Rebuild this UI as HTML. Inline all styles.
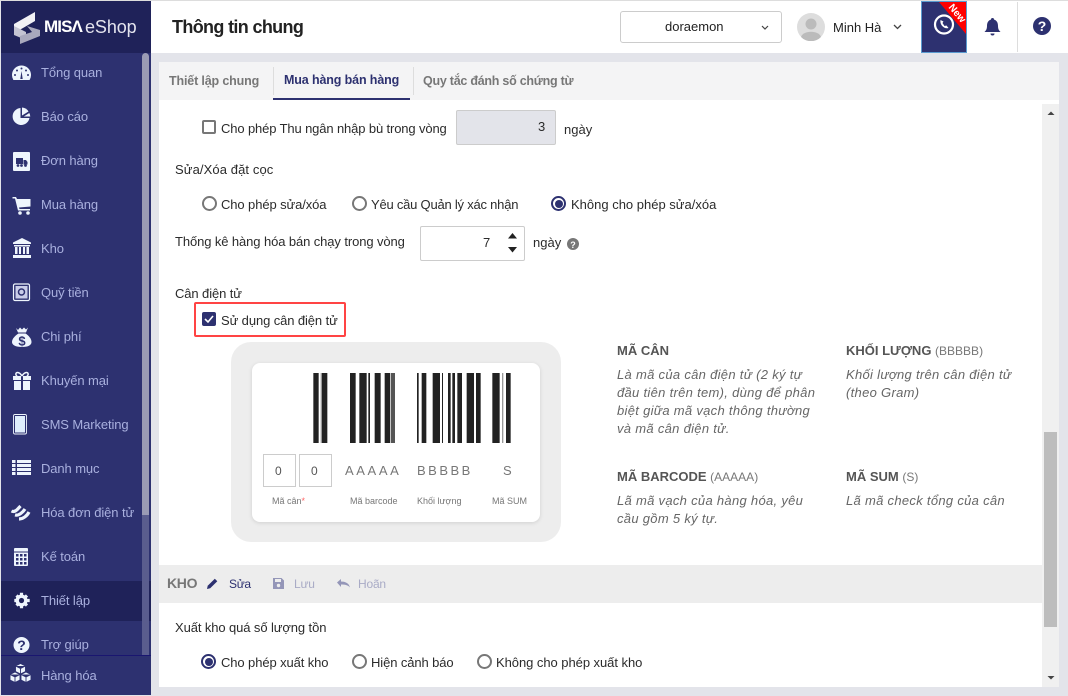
<!DOCTYPE html>
<html><head><meta charset="utf-8"><style>
html,body{margin:0;padding:0}
body{width:1068px;height:696px;overflow:hidden;position:relative;background:#e3e4ea;font-family:"Liberation Sans","Noto Sans CJK SC",sans-serif;font-size:13px;color:#2b2b2b}
div,span,svg{position:absolute}
.t{white-space:nowrap;line-height:16px}
.n{color:#a9b0de;font-size:13px;left:41px;letter-spacing:-.1px}
.i{left:11px;width:22px;height:22px}
.rd{width:11px;height:11px;border:2px solid #777;border-radius:50%;background:#fff}
.on{border-color:#2d3170}
.on:after{content:"";position:absolute;left:1.5px;top:1.5px;width:8px;height:8px;border-radius:50%;background:#2d3170}
.em{font-style:italic;color:#666;line-height:18px;font-size:13px;letter-spacing:.3px}
.h{font-weight:bold;color:#555;font-size:13px}
.sm{font-size:9px;color:#777;line-height:10px}
.g{color:#777;font-size:13px;letter-spacing:2.6px}
</style></head><body>
<div style="left:0;top:0;width:1068px;height:1px;background:#ddd"></div>
<div style="left:1px;top:1px;width:150px;height:694px;background:#2d3170"></div>
<div style="left:1px;top:1px;width:150px;height:52px;background:#1f2259"></div>
<div style="left:1px;top:581px;width:150px;height:40px;background:#1f2259"></div>
<div style="left:142px;top:53px;width:7px;height:602px;background:#9a9bb4;border-radius:4px 4px 0 0"></div>
<div style="left:142px;top:515px;width:7px;height:140px;background:#5a5d8e"></div>
<div style="left:1px;top:655px;width:150px;height:1px;background:#1a1670"></div>
<div style="left:1px;top:656px;width:150px;height:39px;background:#2d3170"></div>

<svg style="left:13px;top:11px" width="28" height="35" viewBox="0 0 28 35"><path d="M1 13L22 1V10L10 17L1 22Z" fill="#f1f1f5"/><path d="M1 15L1 24L13 29V21L5 17Z" fill="#c4c4d2"/><path d="M14 15L27 19V25L7 33V25L19 21Z" fill="#a9a9bd"/></svg>
<div class="t" style="left:44px;top:19px;font-weight:bold;font-size:17px;color:#fff;letter-spacing:-.9px">MISΛ</div>
<div class="t" style="left:85px;top:19px;font-size:18px;color:#e4e4ee;letter-spacing:-.1px">eShop</div>

<div class="t n" style="top:65px">Tổng quan</div>
<div class="t n" style="top:109px">Báo cáo</div>
<div class="t n" style="top:153px">Đơn hàng</div>
<div class="t n" style="top:197px">Mua hàng</div>
<div class="t n" style="top:241px">Kho</div>
<div class="t n" style="top:285px">Quỹ tiền</div>
<div class="t n" style="top:329px">Chi phí</div>
<div class="t n" style="top:373px">Khuyến mại</div>
<div class="t n" style="top:417px">SMS Marketing</div>
<div class="t n" style="top:461px">Danh mục</div>
<div class="t n" style="top:505px">Hóa đơn điện tử</div>
<div class="t n" style="top:549px">Kế toán</div>
<div class="t n" style="top:593px">Thiết lập</div>
<div class="t n" style="top:637px">Trợ giúp</div>
<div class="t n" style="top:668px">Hàng hóa</div>

<svg class="i" style="top:64.500px" viewBox="0 0 22 22" fill="#eef5fd"><path d="M2.400 15A9.500 9.500 0 1 1 18.600 15Z"/><path d="M10.500 6l-1.200 8h2.400z" fill="#2d3170"/><g fill="#2d3170"><circle cx="4" cy="10" r="1"/><circle cx="6" cy="5.500" r="1"/><circle cx="10.500" cy="3.500" r="1"/><circle cx="15" cy="5.500" r="1"/><circle cx="17" cy="10" r="1"/></g></svg>
<svg class="i" style="top:105px" viewBox="0 0 22 22" fill="#eef5fd"><path d="M9.500 3A8.500 8.500 0 1 0 18.500 13H9.500Z"/><path d="M11 2.500A8 8 0 0 1 17.500 6.500L11 10.500Z"/><path d="M18.300 8A9 9 0 0 1 19.300 11.500H12.800Z"/></svg>
<svg class="i" style="top:150px" viewBox="0 0 22 22"><rect x="2" y="2" width="17" height="19" rx="1" fill="#eef5fd"/><path d="M5 8h7v6H5zM12.500 10h2.500l1.500 2v2.500h-4z" fill="#2d3170"/><circle cx="7" cy="15.500" r="1.400" fill="#2d3170"/><circle cx="10.500" cy="15.500" r="1.400" fill="#2d3170"/><circle cx="14.500" cy="15.500" r="1.400" fill="#2d3170"/></svg>
<svg class="i" style="top:194px" viewBox="0 0 22 22" fill="#eef5fd"><path d="M1.500 3h3.500l1 2h13.500v7.500l-11.500 1 .5 1.500H19v1.500H7L4 4.500H1.500Z"/><circle cx="9" cy="19" r="1.800"/><circle cx="17" cy="19" r="1.800"/></svg>
<svg class="i" style="top:237px" viewBox="0 0 22 22" fill="#eef5fd"><path d="M11 1l9 4.500V7H2V5.500Z"/><rect x="3" y="8" width="16" height="1.500"/><rect x="4" y="10" width="2.500" height="7"/><rect x="8" y="10" width="2" height="7"/><rect x="12" y="10" width="2" height="7"/><rect x="15.500" y="10" width="2.500" height="7"/><rect x="2" y="18" width="18" height="3"/></svg>
<svg class="i" style="top:282px" viewBox="0 0 22 22"><rect x="2.500" y="2" width="16" height="16.500" rx="1.500" fill="#2d3170" stroke="#eef5fd" stroke-width="1.200"/><rect x="4.500" y="4" width="12" height="12.500" fill="#c9cde8"/><circle cx="10.500" cy="10" r="3" fill="none" stroke="#2d3170" stroke-width="1.500"/></svg>
<svg class="i" style="top:326px" viewBox="0 0 22 22" fill="#eef5fd"><path d="M5 2l2 2 2-2.500 2 2 2-2 2 2 2-2-2 5H7Z"/><path d="M7.500 7.500h7c3 2 6 5 6 8.500 0 3-3 5-9.500 5S1 19 1 16c0-3.500 3.500-6.500 6.500-8.500Z"/><text x="11" y="19.500" font-size="13" font-weight="bold" fill="#2d3170" text-anchor="middle" font-family="Liberation Sans">$</text></svg>
<svg class="i" style="top:370px" viewBox="0 0 22 22" fill="#eef5fd"><path d="M2 6h8v4H2ZM12 6h8v4h-8ZM3 11h7v9H3ZM12 11h7v9h-7Z"/><path d="M11 6C8 1 4 2 5 5l1 1M11 6c3-5 7-4 6-1l-1 1" fill="none" stroke="#eef5fd" stroke-width="1.500"/></svg>
<svg class="i" style="top:413px" viewBox="0 0 22 22"><rect x="2.500" y="1.500" width="13" height="19.500" rx="1.500" fill="#2d3170" stroke="#eef5fd" stroke-width=".9"/><rect x="4" y="3" width="10" height="16.500" fill="#dfeefc"/></svg>
<svg class="i" style="top:459px" viewBox="0 0 22 22" fill="#eef5fd"><path d="M1 1h3.500v3H1zM6 1h14v3H6zM1 5h3.500v3H1zM6 5h14v3H6zM1 9h3.500v3H1zM6 9h14v3H6zM1 13h3.500v3H1zM6 13h14v3H6z"/></svg>
<svg class="i" style="top:502px;left:10px" viewBox="0 0 22 22" fill="none" stroke="#eef5fd" stroke-width="3.200"><path d="M1.500 9c4 2 7-3 9-5"/><path d="M5 13c4 1 8-3 10-6"/><path d="M9 17c4 0 8-3 10-7"/></svg>
<svg class="i" style="top:546px" viewBox="0 0 22 22"><rect x="3" y="2" width="14" height="18" rx="1" fill="#eef5fd"/><path d="M3 6h14" stroke="#2d3170"/><g fill="#2d3170"><rect x="5" y="8" width="2.500" height="2.500"/><rect x="9" y="8" width="2.500" height="2.500"/><rect x="13" y="8" width="2.500" height="2.500"/><rect x="5" y="12" width="2.500" height="2.500"/><rect x="9" y="12" width="2.500" height="2.500"/><rect x="13" y="12" width="2.500" height="2.500"/><rect x="5" y="16" width="2.500" height="2.500"/><rect x="9" y="16" width="2.500" height="2.500"/><rect x="13" y="16" width="2.500" height="2.500"/></g></svg>
<svg class="i" style="top:590px" viewBox="0 0 22 22"><path d="M10 2.800v15.400M2.800 10.500h15.400M5 5.500l10.500 10M15.500 5.500L5 15.500" stroke="#eef5fd" stroke-width="3.200" transform="translate(.5 0)"/><circle cx="10.500" cy="10.500" r="6" fill="#eef5fd"/><circle cx="10.500" cy="10.500" r="2.600" fill="#1f2259"/></svg>
<svg class="i" style="top:634px" viewBox="0 0 22 22"><circle cx="10.500" cy="11" r="8" fill="#eef5fd"/><text x="10.500" y="16" font-size="14" font-weight="bold" fill="#2d3170" text-anchor="middle" font-family="Liberation Sans">?</text></svg>
<svg style="left:9px;top:662px" width="23" height="21" viewBox="0 0 23 21" fill="#eef5fd" stroke="#2d3170" stroke-width=".9"><path d="M11.500 1.500l5 2.500v5.500l-5 2.500-5-2.500V4ZM6.500 4l5 2.500 5-2.500M11.500 6.500V12"/><path d="M6 10l5 2.500v5.500l-5 2.500-5-2.500v-5.500ZM1 12.500L6 15l5-2.500M6 15v5.500"/><path d="M17 10l5 2.500v5.500l-5 2.500-5-2.500v-5.500ZM12 12.500l5 2.500 5-2.500M17 15v5.500"/></svg>

<div style="left:151px;top:1px;width:917px;height:52px;background:#fff"></div>
<div class="t" style="left:172px;top:16px;font-size:18px;font-weight:bold;color:#222;line-height:22px;letter-spacing:-.65px">Thông tin chung</div>
<div style="left:620px;top:11px;width:160px;height:30px;border:1px solid #ccc;border-radius:3px;background:#fff"></div>
<div class="t" style="left:665px;top:19px;color:#222;font-size:13px">doraemon</div>
<svg style="left:761px;top:25px" width="8" height="6"><path d="M1 1l3 3 3-3" fill="none" stroke="#444" stroke-width="1.200"/></svg>
<svg style="left:797px;top:13px" width="28" height="28" viewBox="0 0 28 28"><circle cx="14" cy="14" r="14" fill="#ddd"/><circle cx="14" cy="11" r="5.500" fill="#bbb"/><path d="M4 24c2-7 18-7 20 0a14 14 0 0 1-20 0Z" fill="#bbb"/></svg>
<div class="t" style="left:833px;top:20px;color:#222;font-size:13px">Minh Hà</div>
<svg style="left:893px;top:24px" width="9" height="7"><path d="M1 1l3.500 3.500L8 1" fill="none" stroke="#444" stroke-width="1.300"/></svg>
<div style="left:921px;top:1px;width:44px;height:50px;background:#2d3170;border:1px solid #5a9bd0;overflow:hidden">
<svg style="left:0;top:0" width="44" height="50"><path d="M17 0H44V32Z" fill="#f00"/><circle cx="22" cy="22.500" r="9" fill="none" stroke="#fff" stroke-width="2.200"/><path d="M18.500 18c-1 5 4 9.500 8 8l-2-2.500-2 .5-2-3 1-1.500z" fill="#fff"/></svg>
<div class="t" style="left:24px;top:6px;color:#fff;font-size:10px;font-weight:bold;transform:rotate(50deg);line-height:12px">New</div></div>
<svg style="left:984px;top:17px" width="17" height="20" viewBox="0 0 17 20" fill="#2d3170"><path d="M8.500 1a1.500 1.500 0 0 1 1.500 1.500C13 3.500 14 6 14 9c0 3 1 4.500 2.500 6H.5C2 13.500 3 12 3 9c0-3 1-5.500 4-6.500A1.500 1.500 0 0 1 8.500 1Z"/><path d="M6.500 16.500h4a2 2 0 0 1-4 0Z"/></svg>
<div style="left:1017px;top:2px;width:1px;height:50px;background:#ddd"></div>
<svg style="left:1033px;top:17px" width="18" height="18"><circle cx="9" cy="9" r="9" fill="#2d3170"/><text x="9" y="14" font-size="14" font-weight="bold" fill="#fff" text-anchor="middle" font-family="Liberation Sans">?</text></svg>

<div style="left:159px;top:62px;width:900px;height:38px;background:#f4f4f5"></div>
<div style="left:159px;top:100px;width:900px;height:587px;background:#fff"></div>
<div class="t" style="left:169px;top:73px;font-weight:bold;color:#777;font-size:12.500px;letter-spacing:-.15px">Thiết lập chung</div>
<div style="left:273px;top:67px;width:1px;height:28px;background:#ddd"></div>
<div class="t" style="left:284px;top:72px;font-weight:bold;color:#2d3170;font-size:12.500px;letter-spacing:-.13px">Mua hàng bán hàng</div>
<div style="left:273px;top:98px;width:137px;height:2px;background:#2d3170"></div>
<div style="left:413px;top:67px;width:1px;height:28px;background:#ddd"></div>
<div class="t" style="left:423px;top:73px;font-weight:bold;color:#777;font-size:12.500px;letter-spacing:-.25px">Quy tắc đánh số chứng từ</div>

<div style="left:1042px;top:104px;width:17px;height:583px;background:#f0f0f0"></div>
<div style="left:1044px;top:432px;width:13px;height:195px;background:#bdbdbd"></div>
<svg style="left:1046px;top:110px" width="10" height="6"><path d="M1.500 5L5 1.500 8.500 5Z" fill="#444"/></svg>
<svg style="left:1046px;top:675px" width="10" height="6"><path d="M1.500 1L5 4.500 8.500 1Z" fill="#444"/></svg>

<div style="left:202px;top:120px;width:10px;height:10px;border:2px solid #777;border-radius:2px;background:#fff"></div>
<div class="t" style="left:221px;top:121px;letter-spacing:-.13px">Cho phép Thu ngân nhập bù trong vòng</div>
<div style="left:456px;top:110px;width:98px;height:33px;background:#e3e4ea;border:1px solid #ccc;border-radius:2px"></div>
<div class="t" style="left:538px;top:119px">3</div>
<div class="t" style="left:564px;top:122px">ngày</div>

<div class="t" style="left:175px;top:162px;letter-spacing:.1px">Sửa/Xóa đặt cọc</div>
<div class="rd" style="left:202px;top:196px"></div>
<div class="t" style="left:221px;top:197px;letter-spacing:-.1px">Cho phép sửa/xóa</div>
<div class="rd" style="left:352px;top:196px"></div>
<div class="t" style="left:371px;top:197px;letter-spacing:-.22px">Yêu cầu Quản lý xác nhận</div>
<div class="rd on" style="left:551px;top:196px"></div>
<div class="t" style="left:571px;top:197px;letter-spacing:0">Không cho phép sửa/xóa</div>

<div class="t" style="left:175px;top:234px;letter-spacing:-.1px">Thống kê hàng hóa bán chạy trong vòng</div>
<div style="left:420px;top:226px;width:103px;height:33px;border:1px solid #ccc;border-radius:2px;background:#fff"></div>
<div class="t" style="left:483px;top:235px">7</div>
<svg style="left:506px;top:230px" width="13" height="24"><path d="M6.500 3L11 8.500H2ZM2 17H11L6.500 22.500Z" fill="#222"/></svg>
<div class="t" style="left:533px;top:235px">ngày</div>
<svg style="left:567px;top:238px" width="12" height="12"><circle cx="6" cy="6" r="6" fill="#777"/><text x="6" y="10" font-size="9" font-weight="bold" fill="#fff" text-anchor="middle" font-family="Liberation Sans">?</text></svg>

<div class="t" style="left:175px;top:286px;letter-spacing:-.1px">Cân điện tử</div>
<div style="left:194px;top:302px;width:148px;height:31px;border:2px solid #f44;border-radius:2px"></div>
<div style="left:202px;top:312px;width:14px;height:14px;background:#2d3170;border-radius:2px"></div>
<svg style="left:202px;top:312px" width="14" height="14"><path d="M3 7l3 3 5-6" fill="none" stroke="#fff" stroke-width="1.600"/></svg>
<div class="t" style="left:221px;top:313px;letter-spacing:-.1px">Sử dụng cân điện tử</div>

<div style="left:231px;top:342px;width:330px;height:200px;background:#ededed;border-radius:20px"></div>
<div style="left:252px;top:363px;width:288px;height:159px;background:#fff;border-radius:8px;box-shadow:0 1px 4px rgba(0,0,0,.12)"></div>
<svg style="left:225px;top:373px" width="340" height="70" viewBox="0 0 1020 70" preserveAspectRatio="none" fill="#222"><rect x="265" width="16" height="70"/><rect x="287" width="4" height="70" fill="#999"/><rect x="291" width="16" height="70"/><rect x="375" width="17" height="70"/><rect x="403" width="22" height="70"/><rect x="430" width="5" height="70"/><rect x="449" width="18" height="70"/><rect x="479" width="16" height="70"/><rect x="497" width="13" height="70" fill="#555"/><rect x="576" width="5" height="70"/><rect x="590" width="14" height="70"/><rect x="623" width="22" height="70"/><rect x="651" width="3" height="70"/><rect x="669" width="8" height="70"/><rect x="682" width="8" height="70"/><rect x="697" width="14" height="70"/><rect x="725" width="22" height="70"/><rect x="753" width="14" height="70"/><rect x="802" width="22" height="70"/><rect x="831" width="4" height="70" fill="#999"/><rect x="843" width="14" height="70"/></svg>
<div style="left:263px;top:454px;width:31px;height:31px;border:1px solid #ccc"></div>
<div style="left:299px;top:454px;width:31px;height:31px;border:1px solid #ccc"></div>
<div class="t" style="left:275px;top:463px;font-size:12px;color:#555">0</div>
<div class="t" style="left:311px;top:463px;font-size:12px;color:#555">0</div>
<div class="t g" style="left:345px;top:463px">AAAAA</div>
<div class="t g" style="left:417px;top:463px;letter-spacing:2.500px">BBBBB</div>
<div class="t g" style="left:503px;top:463px">S</div>
<div class="t sm" style="left:272px;top:496px">Mã cân<span style="position:static;color:#f66">*</span></div>
<div class="t sm" style="left:350px;top:496px">Mã barcode</div>
<div class="t sm" style="left:417px;top:496px">Khối lượng</div>
<div class="t sm" style="left:492px;top:496px">Mã SUM</div>

<div class="t h" style="left:617px;top:343px">MÃ CÂN</div>
<div class="t em" style="left:617px;top:366px">Là mã của cân điện tử (2 ký tự<br>đầu tiên trên tem), dùng để phân<br>biệt giữa mã vạch thông thường<br>và mã cân điện tử.</div>
<div class="t h" style="left:846px;top:343px">KHỐI LƯỢNG <span style="position:static;font-weight:normal;font-size:12px;color:#777">(BBBBB)</span></div>
<div class="t em" style="left:846px;top:366px">Khối lượng trên cân điện tử<br>(theo Gram)</div>
<div class="t h" style="left:617px;top:469px">MÃ BARCODE <span style="position:static;font-weight:normal;font-size:12px;color:#777">(AAAAA)</span></div>
<div class="t em" style="left:617px;top:492px">Lã mã vạch của hàng hóa, yêu<br>cầu gồm 5 ký tự.</div>
<div class="t h" style="left:846px;top:469px">MÃ SUM <span style="position:static;font-weight:normal;font-size:12px;color:#777">(S)</span></div>
<div class="t em" style="left:846px;top:492px">Lã mã check tổng của cân</div>

<div style="left:159px;top:565px;width:883px;height:38px;background:#ededed"></div>
<div class="t" style="left:167px;top:575px;font-size:14px;font-weight:bold;color:#777;letter-spacing:-.3px">KHO</div>
<svg style="left:206px;top:577px" width="13" height="13" viewBox="0 0 13 13" fill="#2d3170"><path d="M1 12l.7-3.200L8.800 1.700l2.500 2.500-7.100 7.100Z"/></svg>
<div class="t" style="left:229px;top:576px;font-size:12px;color:#2d3170;letter-spacing:-.3px">Sửa</div>
<svg style="left:272px;top:577px" width="13" height="13" viewBox="0 0 13 13"><path d="M1 1h8.500L12 3.500V12H1Z" fill="#9496b8"/><rect x="3" y="2" width="6" height="3" fill="#ededed"/><circle cx="6.500" cy="8.500" r="1.700" fill="#ededed"/></svg>
<div class="t" style="left:294px;top:576px;font-size:12px;color:#a9abc6;letter-spacing:-.2px">Lưu</div>
<svg style="left:336px;top:578px" width="15" height="11" viewBox="0 0 15 11" fill="#9496b8"><path d="M1 4.500L5 1v2.500c4 0 8 1.500 9 6-2-2.500-5-3-9-3V9Z"/></svg>
<div class="t" style="left:358px;top:576px;font-size:12px;color:#a9abc6;letter-spacing:-.2px">Hoãn</div>

<div class="t" style="left:175px;top:620px;letter-spacing:-.1px">Xuất kho quá số lượng tồn</div>
<div class="rd on" style="left:201px;top:654px"></div>
<div class="t" style="left:221px;top:655px;letter-spacing:-.1px">Cho phép xuất kho</div>
<div class="rd" style="left:352px;top:654px"></div>
<div class="t" style="left:371px;top:655px;letter-spacing:-.1px">Hiện cảnh báo</div>
<div class="rd" style="left:477px;top:654px"></div>
<div class="t" style="left:496px;top:655px;letter-spacing:-.05px">Không cho phép xuất kho</div>
</body></html>
